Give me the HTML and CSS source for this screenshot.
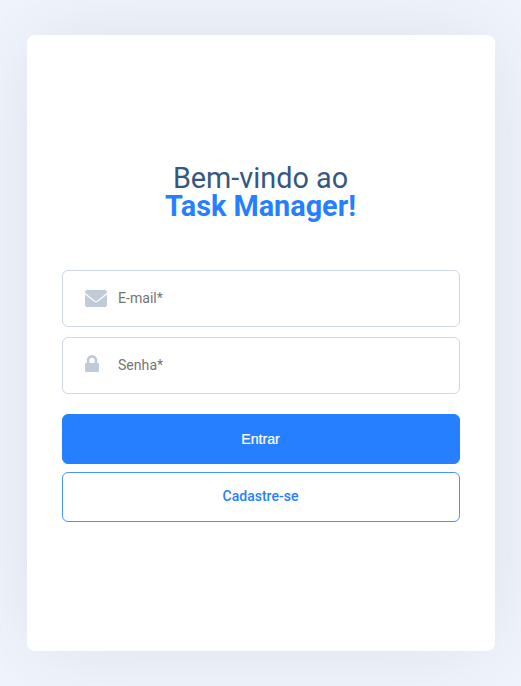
FILE: index.html
```html
<!DOCTYPE html>
<html lang="pt-BR">
<head>
<meta charset="utf-8">
<title>Task Manager</title>
<link rel="stylesheet" href="styles.css">
</head>
<body>
<main class="card">
  <h1 class="title">Bem-vindo ao<strong>Task Manager!</strong></h1>
  <form class="form">
    <label class="field">
      <svg class="icon" viewBox="0 0 22 18"><path d="M2 0h18q2 0 2 2v.8L12.500 10.400q-1.500 1-3 0L0 2.800V2q0-2 2-2zM0 4.500l9 7.100q2 1.300 4 0l9-7.100V15q0 2-2 2H2q-2 0-2-2z"/></svg>
      <input class="input" type="email" placeholder="E-mail*">
    </label>
    <label class="field">
      <svg class="icon lock" viewBox="0 0 22 18"><path fill-rule="evenodd" d="M1.700 8V5.300a5.300 5.300 0 0 1 10.600 0V8h.4q1.300 0 1.300 1.300v6.400q0 1.300-1.300 1.300H1.300Q0 17 0 15.700V9.300Q0 8 1.300 8zM4.400 8h5.200V5.300a2.600 2.600 0 0 0-5.200 0z"/></svg>
      <input class="input" type="password" placeholder="Senha*">
    </label>
    <button class="button primary" type="button">Entrar</button>
    <button class="button secondary" type="button">Cadastre-se</button>
  </form>
</main>
</body>
</html>
```
FILE: styles.css
```css
* { box-sizing: border-box; }
body {
  margin: 0;
  height: 686px;
  padding: 34.5px 26.5px 35px;
  overflow: hidden;
  background: #f1f6fe;
  font-family: Roboto, sans-serif;
}
.card {
  height: 616.5px;
  padding: 129px 35px 0;
  background: #fff;
  border-radius: 8px;
  box-shadow: 0 0 90px rgba(34, 34, 51, .105);
}
.title {
  margin: 0;
  text-align: center;
  color: #355784;
  font-size: 28.8px;
  font-weight: 400;
  line-height: 28px;
}
.title strong {
  display: block;
  color: #267fff;
  font-weight: 700;
}
.form {
  display: flex;
  flex-direction: column;
  margin-top: 50.5px;
}
.field {
  display: flex;
  align-items: center;
  height: 57px;
  margin-bottom: 10px;
  padding: 0 22.5px;
  border: 1px solid #cfd6e4;
  border-radius: 6px;
}
.icon {
  width: 22px;
  height: 18px;
  margin-right: 11px;
  fill: #c0cbd9;
}
.lock { margin-bottom: 3px; }
.input {
  flex: 1;
  min-width: 0;
  padding: 0 0 2px;
  border: 0;
  outline: 0;
  background: transparent;
  font: 14.1px Roboto, sans-serif;
}
.input::placeholder { color: #757575; }
.button {
  height: 50px;
  padding: 0;
  border: 1px solid #267fff;
  border-radius: 6px;
  font: 500 14px Roboto, sans-serif;
}
.primary {
  margin: 10px 0 8px;
  background: #267fff;
  color: #fff;
  font: 14.2px "Liberation Sans", sans-serif;
  -webkit-text-stroke: .2px #fff;
}
.secondary {
  padding-bottom: 2px;
  border-color: #4a94fd;
  background: #fff;
  color: #267fff;
}
```
